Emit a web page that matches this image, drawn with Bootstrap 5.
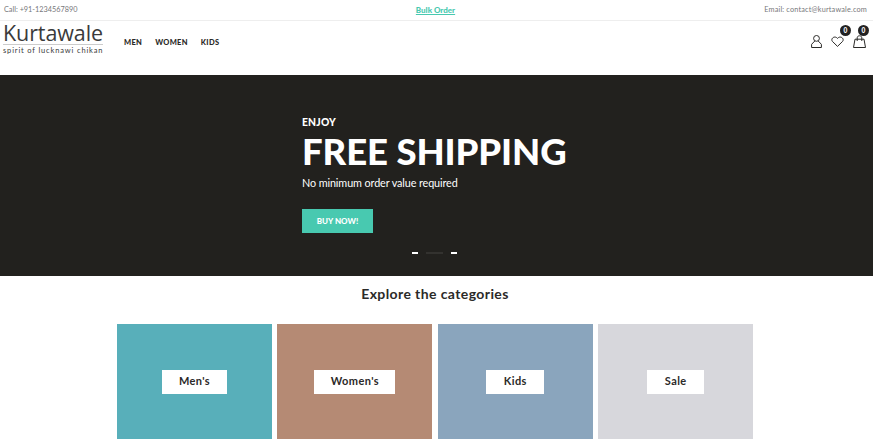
<!DOCTYPE html>
<html lang="en">
<head>
    <meta charset="UTF-8">
    <title>Kurtawale</title>
    <link href="https://cdn.jsdelivr.net/npm/bootstrap@5.3.0/dist/css/bootstrap.min.css" rel="stylesheet">
    <style>
        body {
            font-family: "Lato", "Liberation Sans", sans-serif;
            color: #2b2a28;
            background: #fff;
        }

        .top-strip {
            display: grid;
            grid-template-columns: 1fr auto 1fr;
            align-items: center;
            height: 21px;
            padding: 0 6px 0 4px;
            border-bottom: 1px solid #eeeeee;
            font-size: 7.3px;
            color: #77777b;
        }

        .mail-text {
            letter-spacing: .18px;
        }

        .bulk-link {
            color: #48c9b0;
            font-weight: 900;
            font-size: 8px;
        }

        .main-head {
            height: 54px;
            padding: 1px 7px 0 3px;
        }

        .brand-box {
            width: 100px;
            color: #3a3a3a;
        }

        .brand-name {
            font-family: "Open Sans", sans-serif;
            font-size: 21.5px;
            line-height: 22px;
            border-bottom: 1px solid #ccc;
            letter-spacing: -.1px;
        }

        .brand-tag {
            font-size: 7.5px;
            line-height: 9px;
            letter-spacing: .85px;
            white-space: nowrap;
            margin-top: 1px;
        }

        .main-menu {
            margin-left: 21px;
            margin-top: 9px;
            gap: 13px;
            font-size: 7.5px;
            font-weight: 900;
            letter-spacing: .3px;
        }

        .main-menu a {
            color: #2b2a28;
            text-decoration: none;
        }

        .head-icons {
            padding-top: 13px;
            gap: 9px;
        }

        .icon-wrap {
            position: relative;
            display: block;
            line-height: 0;
        }

        .count-dot {
            position: absolute;
            top: -11px;
            width: 11px;
            height: 11px;
            border-radius: 50%;
            background: #222;
            color: #fff;
            font-size: 6.5px;
            font-weight: 900;
            line-height: 11px;
            text-align: center;
        }

        .dot-heart { right: -7px; }
        .dot-bag { right: -3px; top: -10px; }

        .hero-band {
            height: 201px;
            background: #22211e;
            color: #fff;
            padding: 40px 0 0 302px;
            position: relative;
        }

        .hero-small {
            font-size: 10.3px;
            line-height: 14px;
            font-weight: 900;
            letter-spacing: .2px;
        }

        .hero-big {
            font-size: 36.5px;
            line-height: 46px;
            font-weight: 900;
            margin: -1px 0 0;
            letter-spacing: -.1px;
            white-space: nowrap;
        }

        .hero-sub {
            font-size: 10.8px;
            line-height: 16px;
            margin: 1px 0 0;
            letter-spacing: -.1px;
        }

        .buy-btn {
            width: 71px;
            height: 24px;
            margin-top: 18px;
            padding: 0;
            border: 0;
            border-radius: 0;
            background: #48c9b0;
            color: #fff;
            font-size: 8px;
            font-weight: 900;
            line-height: 24px;
        }

        .hero-dots {
            position: absolute;
            left: 412px;
            top: 177px;
            gap: 8px;
        }

        .hero-dots span {
            display: block;
            width: 6px;
            height: 2px;
            background: #fff;
        }

        .hero-dots span.off {
            width: 17px;
            background: #33322f;
        }

        .cat-title {
            font-size: 14px;
            line-height: 20px;
            font-weight: 700;
            letter-spacing: .4px;
            margin: 0;
            padding: 8px 3px 0 0;
            text-align: center;
            color: #2b2a28;
        }

        .cat-grid {
            display: grid;
            grid-template-columns: repeat(4, 155px);
            gap: 5.4px;
            margin: 20px 0 0 117px;
        }

        .cat-tile {
            height: 115px;
        }

        .cat-label {
            height: 24px;
            background: #fff;
            font-size: 11px;
            font-weight: 700;
            letter-spacing: .4px;
            color: #2b2a28;
        }

        .label-men { width: 65px; }
        .label-women { width: 81px; }
        .label-kids { width: 58px; }
        .label-sale { width: 57px; }

        .tile-men { background: #58afba; }
        .tile-women { background: #b58a74; }
        .tile-kids { background: #8aa5bd; }
        .tile-sale { background: #d7d7dc; }
    </style>
</head>
<body>

<div class="top-strip">
    <span>Call: +91-1234567890</span>
    <a class="bulk-link" href="#">Bulk Order</a>
    <span class="mail-text text-end">Email: contact@kurtawale.com</span>
</div>

<header class="main-head d-flex align-items-start justify-content-between">
    <div class="d-flex align-items-center">
        <div class="brand-box">
            <div class="brand-name">Kurtawale</div>
            <div class="brand-tag">spirit of lucknawi chikan</div>
        </div>
        <nav class="main-menu d-flex">
            <a href="#">MEN</a>
            <a href="#">WOMEN</a>
            <a href="#">KIDS</a>
        </nav>
    </div>
    <div class="head-icons d-flex align-items-center">
        <a class="icon-wrap" href="#">
            <svg width="11" height="13" viewBox="0 0 11 13" fill="none" stroke="#2b2a28" stroke-width="1">
                <circle cx="5.5" cy="3.4" r="2.9"/>
                <path d="M3.8 6 .6 9.3v3.2h9.8V9.3L7.2 6"/>
            </svg>
        </a>
        <a class="icon-wrap" href="#">
            <svg width="13" height="11" viewBox="0 0 13 11" fill="none" stroke="#2b2a28" stroke-width="1">
                <path d="M6.5 10.4 1.4 5.4C-.7 2.8 3.5-1 6.5 2.4 9.5-1 13.7 2.8 11.6 5.4Z"/>
            </svg>
            <span class="count-dot dot-heart">0</span>
        </a>
        <a class="icon-wrap" href="#">
            <svg width="13" height="13" viewBox="0 0 13 13" fill="none" stroke="#2b2a28" stroke-width="1">
                <path d="M2 4.2H11L12.5 12.5H.5Z"/>
                <path d="M4.2 6V2.8C4.2.1 8.8.1 8.8 2.8V6"/>
            </svg>
            <span class="count-dot dot-bag">0</span>
        </a>
    </div>
</header>

<section class="hero-band">
    <div class="hero-small">ENJOY</div>
    <h1 class="hero-big">FREE SHIPPING</h1>
    <p class="hero-sub">No minimum order value required</p>
    <a class="btn buy-btn" href="#">BUY NOW!</a>
    <div class="hero-dots d-flex align-items-center">
        <span></span><span class="off"></span><span></span>
    </div>
</section>

<h2 class="cat-title">Explore the categories</h2>

<div class="cat-grid">
    <div class="cat-tile tile-men d-flex align-items-center justify-content-center">
        <div class="cat-label label-men d-flex align-items-center justify-content-center">Men's</div>
    </div>
    <div class="cat-tile tile-women d-flex align-items-center justify-content-center">
        <div class="cat-label label-women d-flex align-items-center justify-content-center">Women's</div>
    </div>
    <div class="cat-tile tile-kids d-flex align-items-center justify-content-center">
        <div class="cat-label label-kids d-flex align-items-center justify-content-center">Kids</div>
    </div>
    <div class="cat-tile tile-sale d-flex align-items-center justify-content-center">
        <div class="cat-label label-sale d-flex align-items-center justify-content-center">Sale</div>
    </div>
</div>

<script src="https://cdn.jsdelivr.net/npm/bootstrap@5.3.0/dist/js/bootstrap.bundle.min.js"></script>
</body>
</html>
